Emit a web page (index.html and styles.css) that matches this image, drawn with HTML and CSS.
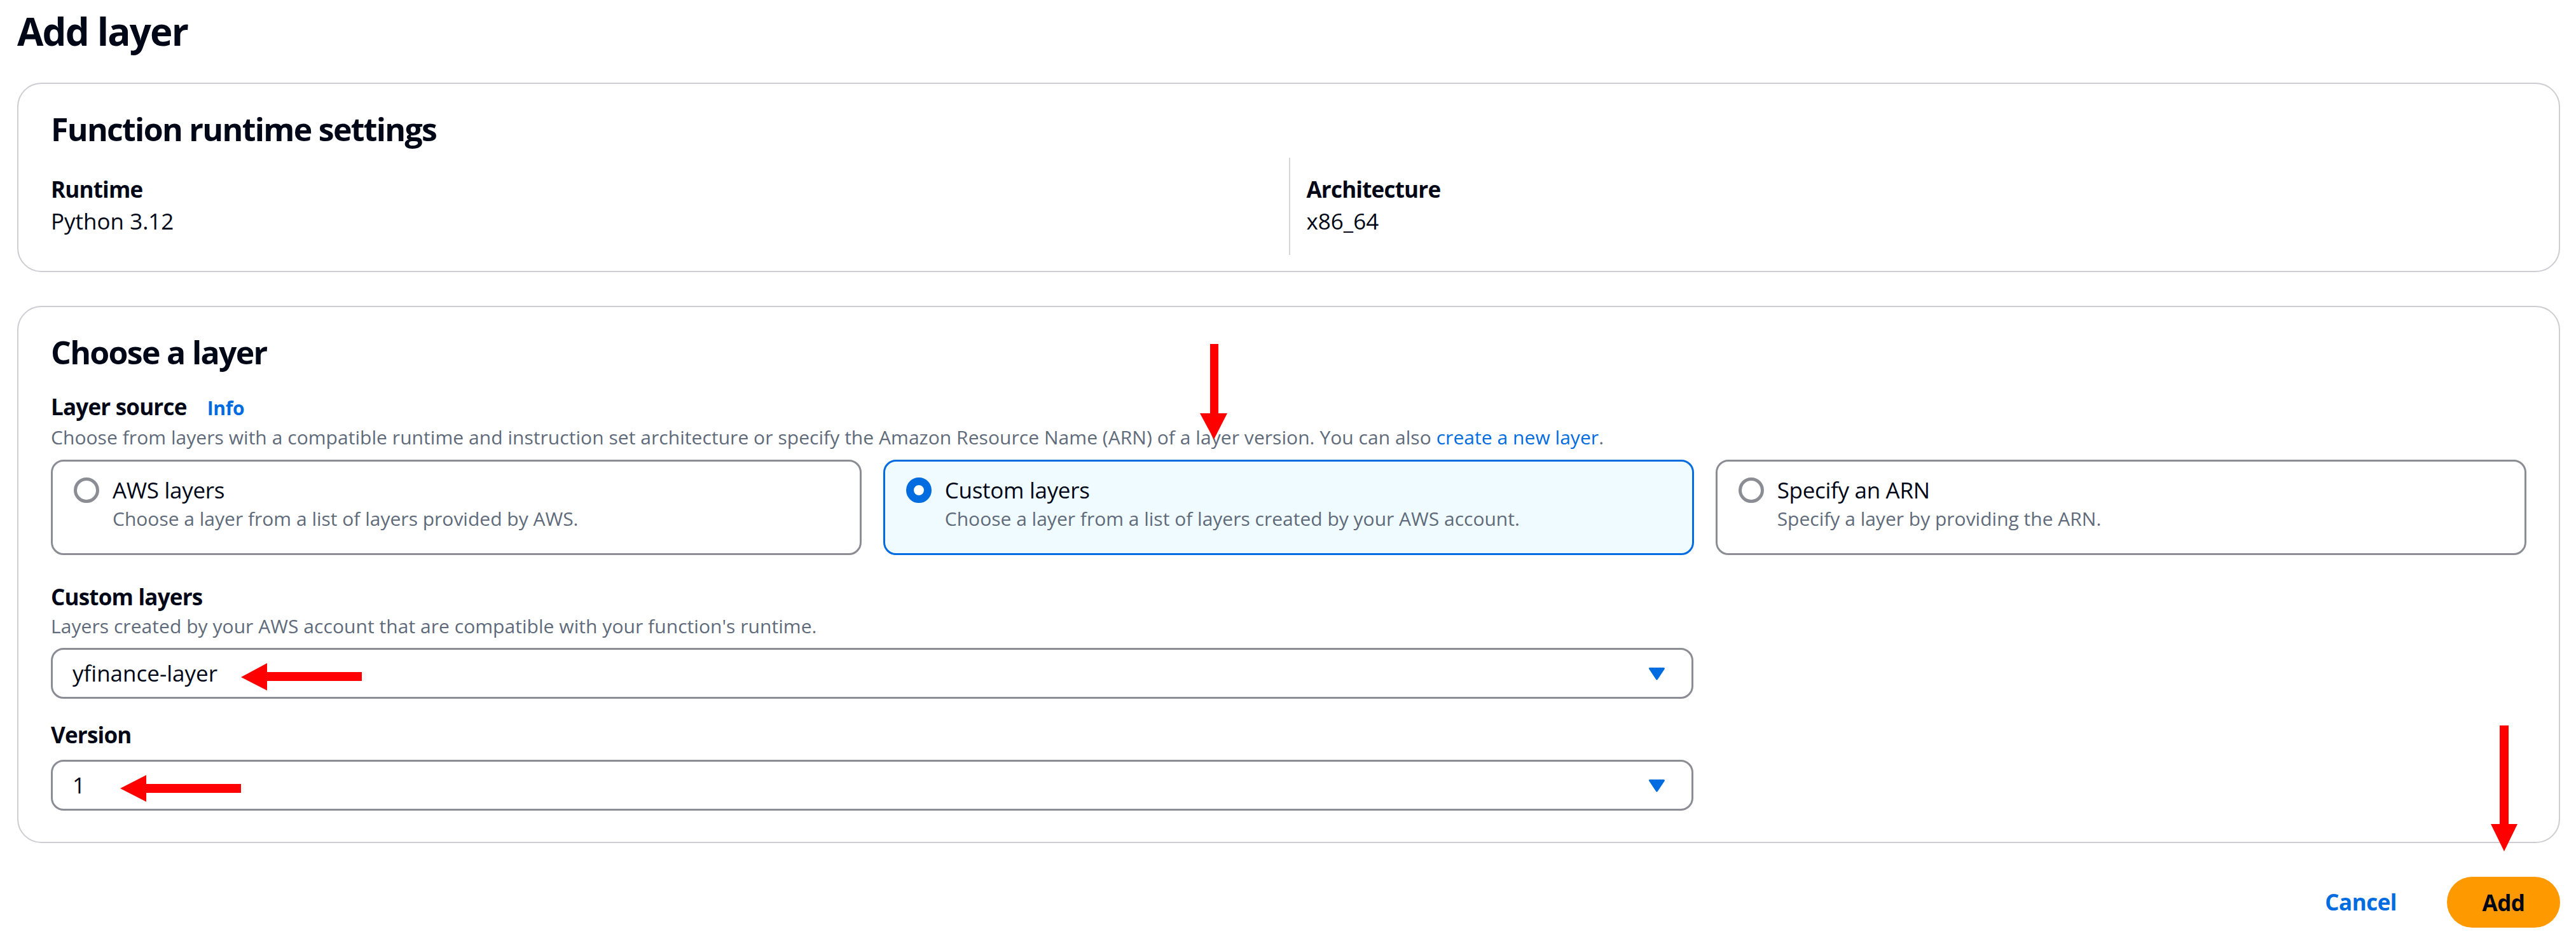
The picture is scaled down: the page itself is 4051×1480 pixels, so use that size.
FILE: index.html
```html
<!DOCTYPE html>
<html lang="en">
<head>
<meta charset="utf-8">
<title>Add layer</title>
<link rel="stylesheet" href="styles.css">
</head>
<body>
<div class="page">
  <h1 class="page-title">Add layer</h1>

  <section class="card card-runtime">
    <h2 class="card-title">Function runtime settings</h2>
    <div class="kv-grid">
      <div class="kv">
        <div class="kv-label">Runtime</div>
        <div class="kv-value">Python 3.12</div>
      </div>
      <div class="kv kv-divided">
        <div class="kv-label">Architecture</div>
        <div class="kv-value">x86_64</div>
      </div>
    </div>
  </section>

  <section class="card card-choose">
    <h2 class="card-title">Choose a layer</h2>

    <div class="field field-source">
      <div class="field-label">Layer source <a class="info-link">Info</a></div>
      <div class="field-desc">Choose from layers with a compatible runtime and instruction set architecture or specify the Amazon Resource Name (ARN) of a layer version. You can also <a class="desc-link">create a new layer</a>.</div>
      <div class="tiles">
        <div class="tile">
          <span class="radio-box"><span class="radio"></span></span>
          <span class="tile-text">
            <span class="tile-label">AWS layers</span>
            <span class="tile-desc">Choose a layer from a list of layers provided by AWS.</span>
          </span>
        </div>
        <div class="tile tile-selected">
          <span class="radio-box"><span class="radio radio-checked"></span></span>
          <span class="tile-text">
            <span class="tile-label">Custom layers</span>
            <span class="tile-desc">Choose a layer from a list of layers created by your AWS account.</span>
          </span>
        </div>
        <div class="tile">
          <span class="radio-box"><span class="radio"></span></span>
          <span class="tile-text">
            <span class="tile-label">Specify an ARN</span>
            <span class="tile-desc">Specify a layer by providing the ARN.</span>
          </span>
        </div>
      </div>
    </div>

    <div class="field field-custom">
      <div class="field-label">Custom layers</div>
      <div class="field-desc">Layers created by your AWS account that are compatible with your function's runtime.</div>
      <div class="select">
        <span class="select-value">yfinance-layer</span>
        <svg class="caret" width="27" height="21" viewBox="0 0 27 21"><polygon points="2.5,2.5 24.5,2.5 13.5,19" fill="#006ce0" stroke="#006ce0" stroke-width="3" stroke-linejoin="round"/></svg>
      </div>
    </div>

    <div class="field field-version">
      <div class="field-label">Version</div>
      <div class="select">
        <span class="select-value">1</span>
        <svg class="caret" width="27" height="21" viewBox="0 0 27 21"><polygon points="2.5,2.5 24.5,2.5 13.5,19" fill="#006ce0" stroke="#006ce0" stroke-width="3" stroke-linejoin="round"/></svg>
      </div>
    </div>
  </section>

  <div class="actions">
    <a class="btn-link">Cancel</a>
    <button class="btn-primary">Add</button>
  </div>

  <svg class="annotations" width="4051" height="1480" viewBox="0 0 4051 1480">
    <rect x="1903" y="528" width="13" height="112" fill="#ff0000"/>
    <polygon points="1887,637 1930,637 1909,678" fill="#ff0000"/>
    <polygon points="379,1052 420,1030 420,1073" fill="#ff0000"/>
    <rect x="418" y="1044" width="151" height="14" fill="#ff0000"/>
    <polygon points="189,1227 230,1206 230,1248" fill="#ff0000"/>
    <rect x="228" y="1220" width="151" height="14" fill="#ff0000"/>
    <rect x="3931" y="1128" width="14" height="157" fill="#ff0000"/>
    <polygon points="3917,1283 3959,1283 3938,1326" fill="#ff0000"/>
  </svg>
</div>
</body>
</html>
```

FILE: styles.css
```css
* { box-sizing: border-box; }

html, body {
  margin: 0;
  padding: 0;
  background: #ffffff;
}

body {
  font-family: "Open Sans", "Noto Sans", "Liberation Sans", sans-serif;
  color: #000716;
}

.page {
  position: relative;
  padding: 0 25px 0 27px;
  min-height: 1480px;
}

.page-title {
  margin: 13px 0 0;
  font-size: 60px;
  line-height: 72px;
  font-weight: 700;
  letter-spacing: -1.8px;
}

.card {
  border: 2px solid #cdcdd3;
  border-radius: 38px;
  padding: 41px 51px 25px;
  background: #ffffff;
}

.card-runtime { margin-top: 45px; }

.card-choose {
  margin-top: 53px;
  padding-bottom: 49px;
}

.card-title {
  margin: 0;
  font-size: 50px;
  line-height: 60px;
  font-weight: 700;
  letter-spacing: -1.7px;
}

.kv-grid {
  display: grid;
  grid-template-columns: 1fr 1fr;
  margin-top: 15px;
}

.kv {
  padding: 25px 0 28px;
}

.kv-divided {
  border-left: 2px solid #d5d7dc;
  padding-left: 26px;
}

.kv-label {
  font-size: 35px;
  line-height: 50px;
  font-weight: 700;
  letter-spacing: -0.8px;
}

.kv-value {
  font-size: 35px;
  line-height: 50px;
  letter-spacing: 0;
}

.field-source { margin-top: 31px; }
.field-custom { margin-top: 41px; }
.field-version { margin-top: 32px; }

.field-label {
  font-size: 35px;
  line-height: 50px;
  font-weight: 700;
  letter-spacing: -0.8px;
}

.info-link {
  color: #006ce0;
  font-size: 30px;
  font-weight: 700;
  margin-left: 24px;
  letter-spacing: -0.4px;
}

.field-desc {
  margin-top: 1px;
  font-size: 30px;
  line-height: 40px;
  color: #5f6b7a;
  letter-spacing: 0.05px;
}

.desc-link {
  color: #006ce0;
}

.tiles {
  display: grid;
  grid-template-columns: repeat(3, 1fr);
  column-gap: 33.5px;
  margin-top: 15px;
}

.tile {
  display: flex;
  align-items: flex-start;
  height: 150px;
  border: 3px solid #8c8c94;
  border-radius: 20px;
  padding: 20px 30px 34px 33px;
  background: #ffffff;
}

.tile-selected {
  border-color: #006ce0;
  background: #f0fbff;
}

.radio-box {
  display: flex;
  align-items: center;
  height: 50px;
  margin-right: 21px;
}

.radio {
  display: block;
  width: 40px;
  height: 40px;
  border: 5px solid #8c8c94;
  border-radius: 50%;
  background: #ffffff;
}

.radio-checked {
  border: 12.5px solid #006ce0;
}

.tile-text {
  display: flex;
  flex-direction: column;
}

.tile-label {
  font-size: 35px;
  line-height: 50px;
  letter-spacing: -0.3px;
}

.tile-desc {
  font-size: 30px;
  line-height: 40px;
  color: #5f6b7a;
  letter-spacing: 0;
}

.select {
  display: flex;
  align-items: center;
  justify-content: space-between;
  width: 66.35%;
  height: 80px;
  margin-top: 14px;
  border: 3px solid #8c8c94;
  border-radius: 20px;
  padding: 0 41px 0 31px;
  background: #ffffff;
}

.select-value {
  font-size: 35px;
  line-height: 50px;
  letter-spacing: 0;
}

.caret { display: block; }

.actions {
  display: flex;
  justify-content: flex-end;
  align-items: center;
  margin-top: 53px;
}

.btn-link {
  color: #006ce0;
  font-size: 35px;
  line-height: 50px;
  font-weight: 700;
  margin-right: 79px;
  letter-spacing: -0.5px;
}

.btn-primary {
  width: 178px;
  height: 80px;
  border: none;
  border-radius: 40px;
  background: #ff9900;
  color: #000716;
  font-family: inherit;
  font-size: 35px;
  font-weight: 700;
  letter-spacing: -0.5px;
  padding: 0;
}

.annotations {
  position: absolute;
  top: 0;
  left: 0;
  pointer-events: none;
}
```
